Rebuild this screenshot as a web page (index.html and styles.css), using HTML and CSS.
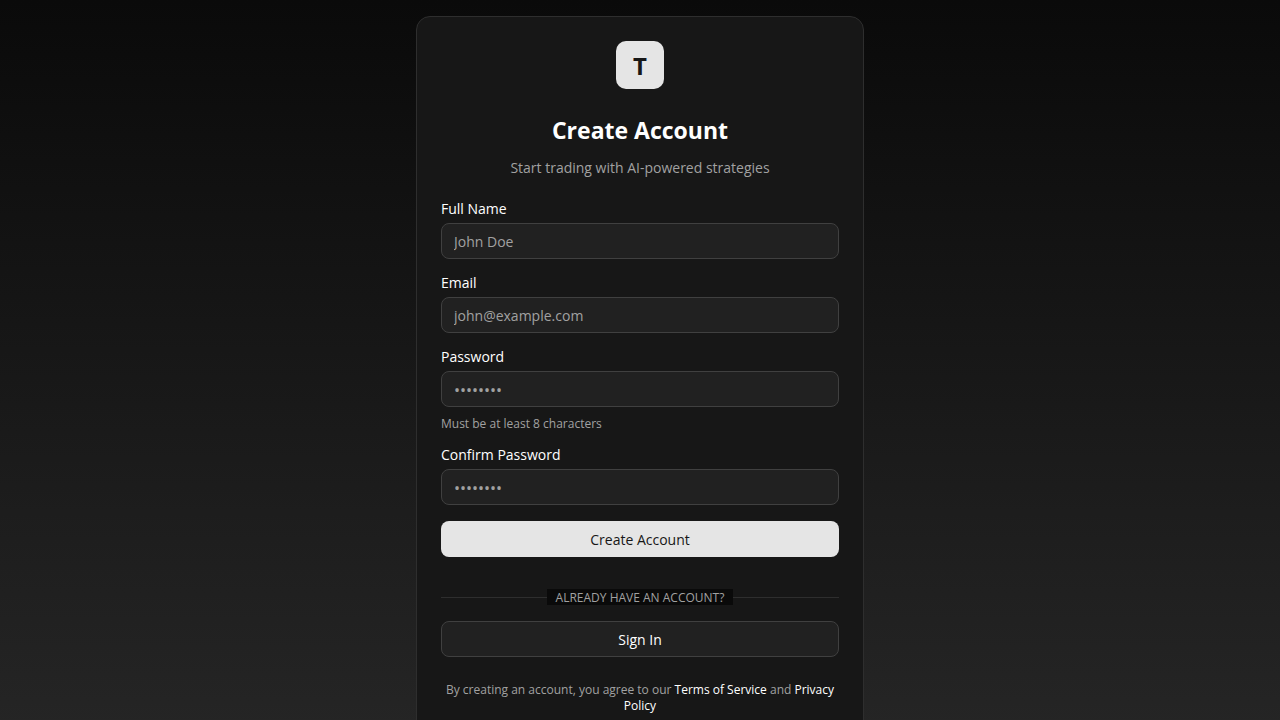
FILE: index.html
```html
<!DOCTYPE html>
<html lang="en">
<head>
<meta charset="utf-8">
<meta name="viewport" content="width=device-width, initial-scale=1">
<title>Create Account</title>
<link rel="stylesheet" href="styles.css">
</head>
<body>
<main class="page">
  <section class="card">
    <header class="header">
      <div class="logo">T</div>
      <h1 class="title">Create Account</h1>
      <p class="subtitle">Start trading with AI-powered strategies</p>
    </header>
    <form class="form">
      <div class="field">
        <label class="label" for="name">Full Name</label>
        <input class="input" id="name" type="text" placeholder="John Doe">
      </div>
      <div class="field">
        <label class="label" for="email">Email</label>
        <input class="input" id="email" type="email" placeholder="john@example.com">
      </div>
      <div class="field">
        <label class="label" for="password">Password</label>
        <input class="input input-password" id="password" type="password" placeholder="••••••••" aria-describedby="hint">
        <p class="hint" id="hint">Must be at least 8 characters</p>
      </div>
      <div class="field">
        <label class="label" for="confirm">Confirm Password</label>
        <input class="input input-password" id="confirm" type="password" placeholder="••••••••">
      </div>
      <button class="button button-primary" type="submit">Create Account</button>
    </form>
    <div class="divider"><span class="divider-text">Already have an account?</span></div>
    <button class="button button-outline" type="button">Sign In</button>
    <p class="terms">By creating an account, you agree to our <a class="link" href="#terms">Terms of Service</a> and <a class="link" href="#privacy">Privacy Policy</a></p>
  </section>
</main>
</body>
</html>
```
FILE: styles.css
```css
* {
  box-sizing: border-box;
  margin: 0;
}

body {
  font-family: "Open Sans", "Noto Sans", sans-serif;
  font-size: 14px;
  line-height: 20px;
  color: #ffffff;
  background: #0a0a0a;
}

.page {
  display: flex;
  align-items: center;
  justify-content: center;
  min-height: 100vh;
  padding: 16px;
  background: linear-gradient(to bottom, #0a0a0a, #262626);
}

.card {
  width: 100%;
  max-width: 448px;
  padding: 24px;
  border: 1px solid #2e2e2e;
  border-radius: 14px;
  background: #171717;
}

.header {
  display: flex;
  flex-direction: column;
  align-items: center;
  margin-bottom: 24px;
  text-align: center;
}

.logo {
  display: flex;
  align-items: center;
  justify-content: center;
  width: 48px;
  height: 48px;
  padding-top: 2px;
  margin-bottom: 24px;
  border-radius: 10px;
  background: #e5e5e5;
  color: #171717;
  font-size: 24px;
  font-weight: 700;
}

.title {
  padding-top: 2px;
  margin-bottom: 12px;
  font-size: 23px;
  font-weight: 700;
  line-height: 30px;
}

.subtitle {
  padding-top: 2px;
  line-height: 18px;
  color: #a1a1a1;
}

.form {
  display: grid;
  gap: 16px;
}

.field {
  display: grid;
  gap: 8px;
}

.label {
  padding-top: 2px;
  line-height: 12px;
}

.input {
  width: 100%;
  height: 36px;
  padding: 4px 12px;
  border: 1px solid #404040;
  border-radius: 8px;
  background: #212121;
  color: #ffffff;
  font: inherit;
}

.input::placeholder {
  color: #a1a1a1;
  opacity: 1;
}

.input-password {
  padding: 6px 12px 4px;
  font-size: 16px;
}

.hint {
  padding-top: 2px;
  color: #a1a1a1;
  font-size: 12px;
  line-height: 14px;
}

.button {
  width: 100%;
  height: 36px;
  padding: 2px 16px 0;
  border: 0;
  border-radius: 8px;
  font: inherit;
}

.button-primary {
  background: #e5e5e5;
  color: #171717;
}

.button-outline {
  border: 1px solid #404040;
  background: #212121;
  color: #ffffff;
}

.divider {
  display: flex;
  align-items: center;
  margin: 32px 0 16px;
  color: #a1a1a1;
  font-size: 12px;
  line-height: 14px;
  text-transform: uppercase;
}

.divider::before,
.divider::after {
  content: "";
  flex: 1;
  height: 1px;
  background: #2e2e2e;
}

.divider-text {
  padding: 2px 9px 0;
  background: #0a0a0a;
}

.terms {
  padding-top: 1px;
  margin-top: 24px;
  color: #a1a1a1;
  font-size: 12px;
  line-height: 16px;
  text-align: center;
}

.link {
  color: #ffffff;
  text-decoration: none;
}
```
